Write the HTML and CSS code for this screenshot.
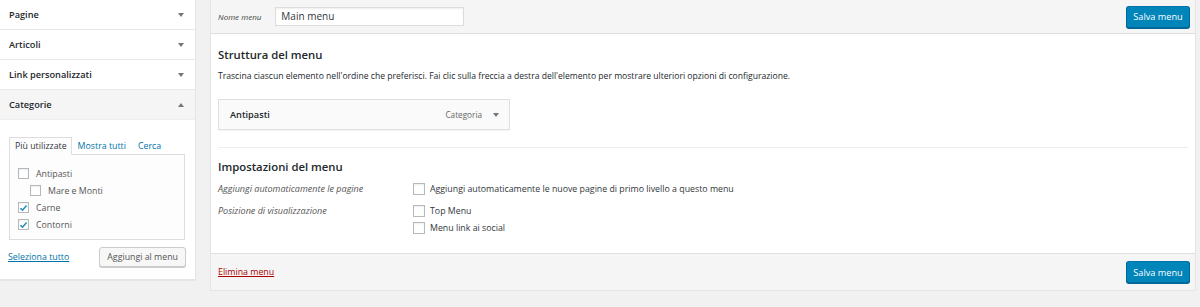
FILE: index.html
```html
<!DOCTYPE html>
<html lang="it">
<head>
<meta charset="utf-8">
<title>Menu</title>
<link rel="stylesheet" href="styles.css">
</head>
<body>
<div class="page">
  <aside class="sidebar">
    <div class="acc-row"><span class="acc-title">Pagine</span><span class="tri down"></span></div>
    <div class="acc-row"><span class="acc-title">Articoli</span><span class="tri down"></span></div>
    <div class="acc-row"><span class="acc-title">Link personalizzati</span><span class="tri down"></span></div>
    <div class="acc-row open"><span class="acc-title">Categorie</span><span class="tri up"></span></div>
    <div class="acc-content">
      <div class="tabs">
        <span class="tab active">Più utilizzate</span>
        <span class="tab">Mostra tutti</span>
        <span class="tab">Cerca</span>
      </div>
      <div class="tab-panel">
        <label class="cb-row"><span class="cb"></span>Antipasti</label>
        <label class="cb-row child"><span class="cb"></span>Mare e Monti</label>
        <label class="cb-row"><span class="cb checked"><svg viewBox="0 0 10 10" class="tick"><path d="M1.6 5.2 L3.9 7.4 L8.4 2.2" /></svg></span>Carne</label>
        <label class="cb-row"><span class="cb checked"><svg viewBox="0 0 10 10" class="tick"><path d="M1.6 5.2 L3.9 7.4 L8.4 2.2" /></svg></span>Contorni</label>
      </div>
      <div class="acc-actions">
        <a class="select-all" href="#">Seleziona tutto</a>
        <span class="btn">Aggiungi al menu</span>
      </div>
    </div>
  </aside>

  <section class="main">
    <header class="main-head">
      <span class="name-label">Nome menu</span>
      <span class="name-input">Main menu</span>
      <span class="spacer"></span>
      <span class="btn primary">Salva menu</span>
    </header>
    <div class="main-body">
      <h3 class="title">Struttura del menu</h3>
      <p class="desc">Trascina ciascun elemento nell'ordine che preferisci. Fai clic sulla freccia a destra dell'elemento per mostrare ulteriori opzioni di configurazione.</p>
      <div class="menu-item">
        <span class="item-title">Antipasti</span>
        <span class="item-type">Categoria</span>
        <span class="tri down dark"></span>
      </div>
      <div class="settings">
        <h3 class="title">Impostazioni del menu</h3>
        <div class="set-row">
          <span class="set-label">Aggiungi automaticamente le pagine</span>
          <div class="set-opts">
            <label class="opt"><span class="cb big"></span>Aggiungi automaticamente le nuove pagine di primo livello a questo menu</label>
          </div>
        </div>
        <div class="set-row">
          <span class="set-label">Posizione di visualizzazione</span>
          <div class="set-opts">
            <label class="opt"><span class="cb big"></span>Top Menu</label>
            <label class="opt"><span class="cb big"></span>Menu link ai social</label>
          </div>
        </div>
      </div>
    </div>
    <footer class="main-foot">
      <a class="delete" href="#">Elimina menu</a>
      <span class="spacer"></span>
      <span class="btn primary">Salva menu</span>
    </footer>
  </section>
</div>
</body>
</html>
```

FILE: styles.css
```css
* { box-sizing: border-box; }
html, body { margin: 0; padding: 0; }
body {
  background: #f1f1f1;
  font-family: "Open Sans", "Noto Sans", sans-serif;
  color: #23282d;
  font-size: 8.8px;
}
.page {
  display: flex;
  align-items: flex-start;
  gap: 14px;
  padding-right: 4px;
}

/* Sidebar */
.sidebar {
  width: 196px;
  flex: none;
  background: #fff;
  border-right: 1px solid #e5e5e5;
  border-bottom: 1px solid #e5e5e5;
  box-shadow: 0 1px 1px rgba(0,0,0,0.04);
}
.acc-row {
  height: 30px;
  display: flex;
  align-items: center;
  justify-content: space-between;
  padding: 0 11px 0 9px;
  border-bottom: 1px solid #e8e8e8;
  background: #fff;
}
.acc-row.open { background: #f5f5f5; border-bottom-color: #eee; }
.acc-title {
  font-size: 9.2px;
  font-weight: 600;
  color: #23282d;
}
.tri {
  width: 0; height: 0;
  border-left: 3px solid transparent;
  border-right: 3px solid transparent;
}
.tri.down { border-top: 4px solid #72777c; }
.tri.up { border-bottom: 4px solid #72777c; }
.tri.dark { border-top-color: #72777c; }

.acc-content {
  padding: 17px 10px 12px 9px;
}
.tabs {
  display: flex;
  align-items: flex-end;
  height: 17px;
  font-size: 8.8px;
}
.tab {
  padding: 0 6px;
  color: #0073aa;
  line-height: 16px;
}
.tab.active {
  color: #32373c;
  border: 1px solid #ddd;
  border-bottom-color: #fdfdfd;
  background: #fdfdfd;
  margin-bottom: -1px;
  position: relative;
  z-index: 1;
  padding: 0 4px 0 5px;
  line-height: 16px;
}
.tab-panel {
  border: 1px solid #ddd;
  background: #fdfdfd;
  height: 86px;
  padding: 13px 8px 0 8px;
  display: flex;
  flex-direction: column;
  gap: 6px;
}
.cb-row {
  display: flex;
  align-items: center;
  gap: 7px;
  font-size: 8.8px;
  color: #555;
  height: 11px;
}
.cb-row.child { padding-left: 12px; }
.cb {
  width: 11px; height: 11px;
  flex: none;
  border: 1px solid #b4b9be;
  background: #fff;
  box-shadow: inset 0 1px 2px rgba(0,0,0,0.07);
  display: inline-flex;
  align-items: center;
  justify-content: center;
}
.cb.big { width: 12px; height: 12px; }
.tick { width: 10px; height: 10px; }
.tick path { fill: none; stroke: #1e8cbe; stroke-width: 1.7; }

.acc-actions {
  margin-top: 7px;
  display: flex;
  align-items: center;
  justify-content: space-between;
  margin-right: -1px;
}
.select-all {
  color: #0073aa;
  font-size: 8.8px;
  text-decoration: underline;
  margin-left: -1px;
}
.btn {
  display: inline-flex;
  align-items: center;
  justify-content: center;
  height: 20px;
  padding: 0 7px;
  font-size: 8.8px;
  color: #555;
  background: #f7f7f7;
  border: 1px solid #ccc;
  border-radius: 3px;
  box-shadow: 0 1px 0 #ccc;
}
.btn.primary {
  height: 22px;
  width: 64px;
  padding: 0;
  color: #fff;
  background: #0085ba;
  border-color: #0073aa #006799 #006799;
  box-shadow: 0 1px 0 #006799;
  font-size: 9.2px;
}

/* Main */
.main {
  flex: 1;
  background: #fff;
  border: 1px solid #e5e5e5;
  border-top: none;
  box-shadow: 0 1px 1px rgba(0,0,0,0.04);
}
.main-head {
  height: 34px;
  display: flex;
  align-items: center;
  padding: 0 5px 0 7px;
  background: #f5f5f5;
  border-bottom: 1px solid #dfdfdf;
}
.name-label {
  font-style: italic;
  font-size: 8px;
  color: #444;
}
.name-input {
  margin-left: 14px;
  width: 189px;
  height: 19px;
  background: #fff;
  border: 1px solid #ddd;
  box-shadow: inset 0 1px 2px rgba(0,0,0,0.07);
  font-size: 10px;
  line-height: 17px;
  padding: 0 5px;
  color: #32373c;
}
.spacer { flex: 1; }

.main-body {
  padding: 12px 7px 19px 7px;
}
.title {
  margin: 0;
  font-size: 11.3px;
  font-weight: 600;
  line-height: 18px;
  color: #23282d;
}
.desc {
  margin: 5px 0 0 0;
  font-size: 8.6px;
  line-height: 14px;
  color: #23282d;
}
.menu-item {
  margin-top: 16px;
  width: 292px;
  height: 31px;
  display: flex;
  align-items: center;
  padding: 0 10px 0 11px;
  background: #fafafa;
  border: 1px solid #dfdfdf;
  box-shadow: 0 1px 1px rgba(0,0,0,0.04);
}
.item-title {
  font-weight: 600;
  font-size: 9.2px;
  flex: 1;
}
.item-type {
  font-size: 8.2px;
  color: #666;
  margin-right: 11px;
}
.settings {
  margin-top: 17px;
  border-top: 1px solid #eee;
  padding-top: 10px;
}
.set-row {
  display: flex;
  margin-top: 7px;
}
.set-row + .set-row { margin-top: 10px; }
.set-label {
  width: 195px;
  flex: none;
  font-style: italic;
  font-size: 9px;
  color: #555;
  line-height: 12px;
}
.set-opts {
  display: flex;
  flex-direction: column;
  gap: 5px;
}
.opt {
  display: flex;
  align-items: center;
  gap: 5px;
  font-size: 8.8px;
  color: #32373c;
  height: 12px;
}

.main-foot {
  height: 37px;
  display: flex;
  align-items: center;
  padding: 0 5px 0 7px;
  background: #f5f5f5;
  border-top: 1px solid #dfdfdf;
}
.delete {
  color: #a00;
  font-size: 8.8px;
  text-decoration: underline;
}
```
